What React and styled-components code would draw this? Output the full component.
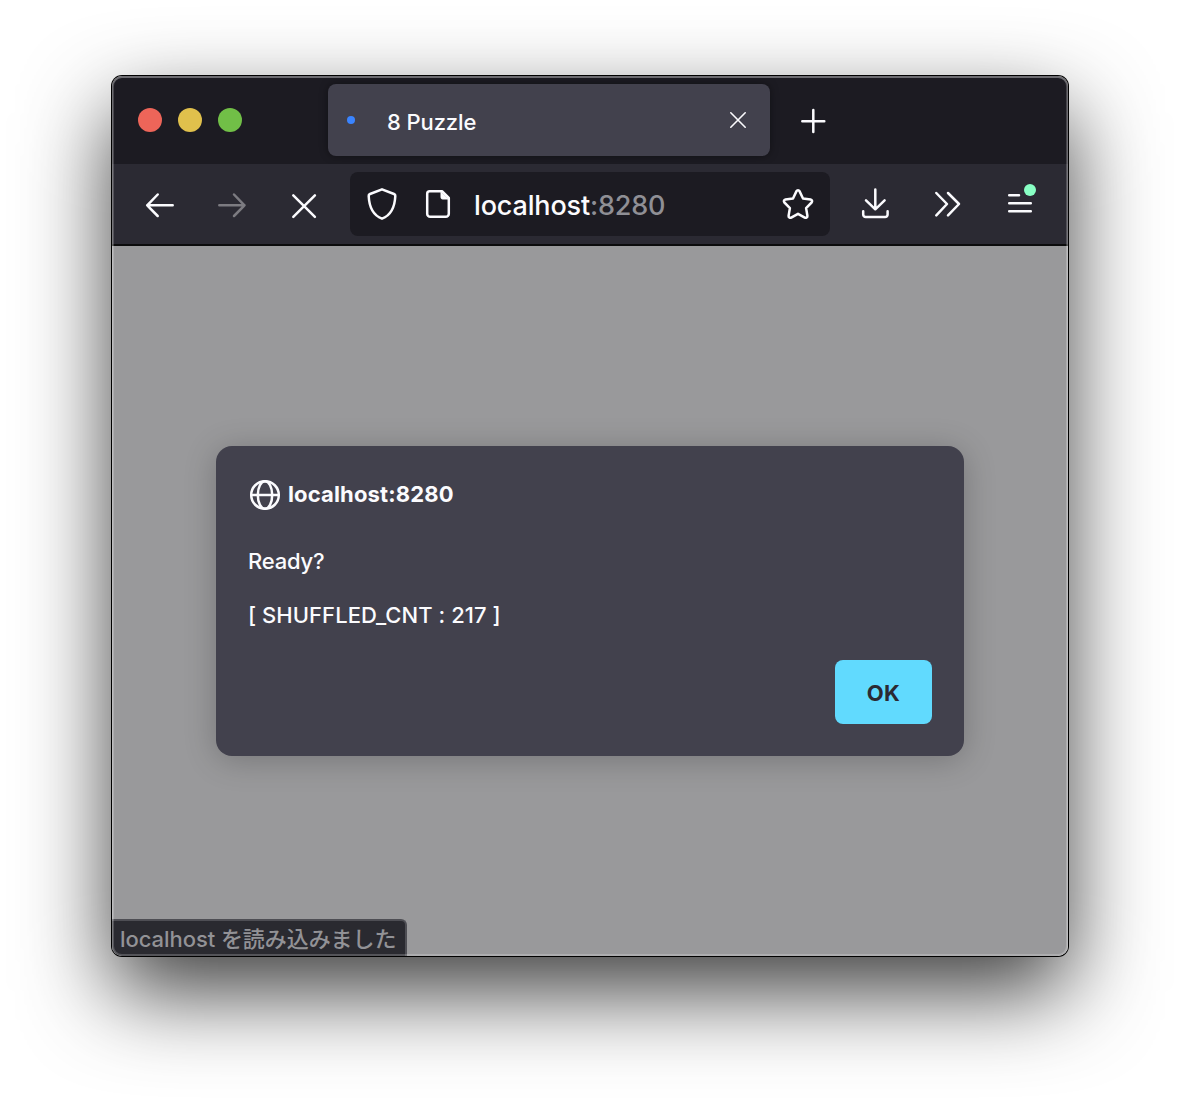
import React from "react";
import styled, { createGlobalStyle } from "styled-components";

const GlobalStyle = createGlobalStyle`
  * { box-sizing: border-box; }
  body { margin: 0; background: #fff; }
`;

const Desktop = styled.main`
  width: 1180px;
  height: 1104px;
  padding: 76px 112px 148px;
  overflow: hidden;
  background: #fff;
  font-family: Inter, "Noto Sans CJK JP", sans-serif;
  font-weight: 450;
  -webkit-font-smoothing: antialiased;
`;

const Window = styled.section`
  position: relative;
  display: flex;
  flex-direction: column;
  width: 956px;
  height: 880px;
  border-radius: 10px;
  box-shadow: 0 0 0 1px #000, 0 36px 88px rgba(0, 0, 0, 0.76);

  &::after {
    content: "";
    position: absolute;
    inset: 0;
    border-radius: 10px;
    box-shadow: inset 0 0 0 2px rgba(255, 255, 255, 0.2), inset 0 1px 0 1px rgba(255, 255, 255, 0.2);
    pointer-events: none;
  }
`;

const TabStrip = styled.header`
  display: flex;
  align-items: center;
  height: 88px;
  padding: 0 26px;
  background: #1c1b22;
  border-radius: 10px 10px 0 0;
`;

const TrafficLights = styled.div`
  display: flex;
  gap: 16px;
  margin-right: 86px;
`;

const Light = styled.span`
  width: 24px;
  height: 24px;
  border-radius: 50%;
  background: ${(p) => p.$color};
`;

const Tab = styled.div`
  display: flex;
  align-items: center;
  width: 442px;
  height: 72px;
  padding: 0 16px 0 19px;
  border-radius: 8px;
  background: #42414d;
  box-shadow: 0 0 8px rgba(0, 0, 0, 0.4);
  color: #fbfbfe;
`;

const LoadingDot = styled.span`
  width: 8px;
  height: 8px;
  border-radius: 50%;
  background: #3a84ff;
`;

const TabTitle = styled.span`
  flex: 1;
  padding: 3px 0 0 32px;
  font-size: 22px;
  line-height: 28px;
  letter-spacing: -0.1px;
`;

const IconButton = styled.button`
  display: flex;
  align-items: center;
  justify-content: center;
  width: 72px;
  height: 64px;
  margin: 0 0 0 ${(p) => p.$gap || 0}px;
  padding: 0;
  border: 0;
  background: none;
  color: ${(p) => (p.$dim ? "#7c7b81" : "#fbfbfe")};
`;

const Icon = styled.svg.attrs({ viewBox: "0 0 32 32", fill: "none", stroke: "currentColor", strokeLinecap: "round", strokeLinejoin: "round" })`
  flex: none;
  width: 32px;
  height: 32px;
  stroke-width: ${(p) => p.$weight || 2.5};
  overflow: visible;
`;

const Toolbar = styled.nav`
  display: flex;
  align-items: center;
  height: 82px;
  padding: 0 12px;
  background: #2b2a33;
  border-bottom: 2px solid #0c0c0d;
`;

const AddressBar = styled.div`
  display: flex;
  align-items: center;
  width: 480px;
  height: 64px;
  margin: 0 10px;
  padding: 0 16px;
  border-radius: 8px;
  background: #1c1b22;
  color: #fbfbfe;
`;

const PageIcon = styled.span`
  display: flex;
  margin-left: 24px;
`;

const Address = styled.span`
  flex: 1;
  padding: 3px 0 0 20px;
  font-size: 27px;
  line-height: 32px;
  letter-spacing: -0.16px;
`;

const Port = styled.span`
  color: #8f8f95;
`;

const Viewport = styled.div`
  display: flex;
  flex: 1;
  flex-direction: column;
  justify-content: space-between;
  align-items: center;
  padding-top: 200px;
  background: #99999b;
  border-radius: 0 0 10px 10px;
  overflow: hidden;
`;

const Dialog = styled.section`
  display: flex;
  flex-direction: column;
  width: 748px;
  height: 310px;
  padding: 32px;
  border-radius: 16px;
  background: #42414d;
  box-shadow: 0 4px 32px rgba(0, 0, 0, 0.23);
  color: #fbfbfe;
`;

const DialogHeader = styled.h1`
  display: flex;
  align-items: center;
  gap: 7px;
  height: 34px;
  margin: 0 0 35px;
  padding-left: 1px;
  font-size: 22px;
  font-weight: 700;
  line-height: 32px;
`;

const Origin = styled.span`
  padding-bottom: 2px;
  letter-spacing: 0.15px;
`;

const Message = styled.p`
  margin: 0 0 26px;
  font-size: 22px;
  line-height: 28px;
  letter-spacing: ${(p) => p.$tracking}px;
`;

const ConfirmButton = styled.button`
  flex: none;
  align-self: flex-end;
  width: 97px;
  height: 64px;
  margin-top: auto;
  padding: 1px 0 0;
  border: 0;
  border-radius: 8px;
  background: #61dafe;
  color: #2b2a33;
  font: 650 22px/28px Inter, sans-serif;
  letter-spacing: 0.3px;
`;

const StatusBar = styled.footer`
  align-self: flex-start;
  width: 295px;
  height: 37px;
  padding: 3px 0 0 8px;
  border: solid #4e4e54;
  border-width: 2px 2px 0 0;
  border-top-right-radius: 6px;
  background: #2a2a30;
  color: #929296;
  font-size: 22px;
  line-height: 30px;
  letter-spacing: -0.06px;
  white-space: nowrap;
`;

const lights = ["#ed6559", "#e0c04c", "#71bf47"];

export default function App() {
  return (
    <Desktop>
      <GlobalStyle />
      <Window>
        <TabStrip>
          <TrafficLights>
            {lights.map((c) => <Light key={c} $color={c} />)}
          </TrafficLights>
          <Tab>
            <LoadingDot />
            <TabTitle>8 Puzzle</TabTitle>
            <Icon $weight={1.6}><path d="M8.800 8.800l14.400 14.400M23.200 8.800L8.800 23.200" /></Icon>
          </Tab>
          <IconButton $gap={7} aria-label="New tab">
            <Icon><path d="M16.300 6v22M5.300 17.300h22" /></Icon>
          </IconButton>
        </TabStrip>
        <Toolbar>
          <IconButton aria-label="Back">
            <Icon><path d="M13.700 6.500L3.200 17.300 13.700 28M3.200 17.300H28.700" /></Icon>
          </IconButton>
          <IconButton $dim aria-label="Forward">
            <Icon><path d="M18 6.500L28.500 17.300 18 28M28.500 17.300H3.300" /></Icon>
          </IconButton>
          <IconButton aria-label="Stop">
            <Icon><path d="M5.300 7.300l21.600 21.600M26.900 7.300L5.300 28.900" /></Icon>
          </IconButton>
          <AddressBar>
            <Icon>
              <path d="M16 1.300l12 4.700c.9.400 1.400 1 1.300 2C28.900 17.500 25.500 27 16 30.700 6.500 27 3.100 17.500 2.700 8c-.1-1 .4-1.600 1.300-2z" />
            </Icon>
            <PageIcon>
              <Icon>
                <path d="M7.700 3.200h12.300l6.800 6.800v15.800a3 3 0 0 1-3 3H8.200a3 3 0 0 1-3-3V5.700a2.500 2.500 0 0 1 2.500-2.500z" />
                <path d="M19 4v5.500a1.500 1.500 0 0 0 1.500 1.500H26z" fill="currentColor" strokeWidth="1" />
              </Icon>
            </PageIcon>
            <Address>localhost<Port>:8280</Port></Address>
            <Icon>
              <path d="M14.500 3.100c.6-1.200 2.400-1.200 3 0l3.500 7.400 7.600 1.100c1.500.2 2 1.900 1 2.900l-5.500 5.600 1.300 7.700c.2 1.500-1.300 2.500-2.600 1.800L16 25.800l-6.800 3.800c-1.300.7-2.800-.3-2.600-1.800l1.300-7.700-5.500-5.600c-1-1-.5-2.700 1-2.900l7.600-1.100z" />
            </Icon>
          </AddressBar>
          <IconButton aria-label="Downloads">
            <Icon>
              <path d="M15.300 1.500V21M6 12.300l9.300 9 9.300-9M3.200 23.300v3.300a2.500 2.500 0 0 0 2.500 2.500h19.400a2.500 2.500 0 0 0 2.500-2.500v-3.300" />
            </Icon>
          </IconButton>
          <IconButton aria-label="More tools">
            <Icon><path d="M4.300 5L15 16 4.300 27.300M16 5l11 11-11 11.300" /></Icon>
          </IconButton>
          <IconButton aria-label="Menu">
            <Icon>
              <path d="M5.200 7.200H15M5.200 15.300h21.600M5.200 23.300h21.600" />
              <circle cx="26" cy="2" r="6" fill="#88ffc4" stroke="none" />
            </Icon>
          </IconButton>
        </Toolbar>
        <Viewport>
          <Dialog role="dialog">
            <DialogHeader>
              <Icon>
                <circle cx="16" cy="16" r="13.800" />
                <path d="M2.500 16h27" />
                <ellipse cx="16" cy="16" rx="7.200" ry="13.800" />
              </Icon>
              <Origin>localhost:8280</Origin>
            </DialogHeader>
            <Message $tracking={-0.2}>Ready?</Message>
            <Message $tracking={0.05}>[ SHUFFLED_CNT : 217 ]</Message>
            <ConfirmButton>OK</ConfirmButton>
          </Dialog>
          <StatusBar>localhost を読み込みました</StatusBar>
        </Viewport>
      </Window>
    </Desktop>
  );
}
